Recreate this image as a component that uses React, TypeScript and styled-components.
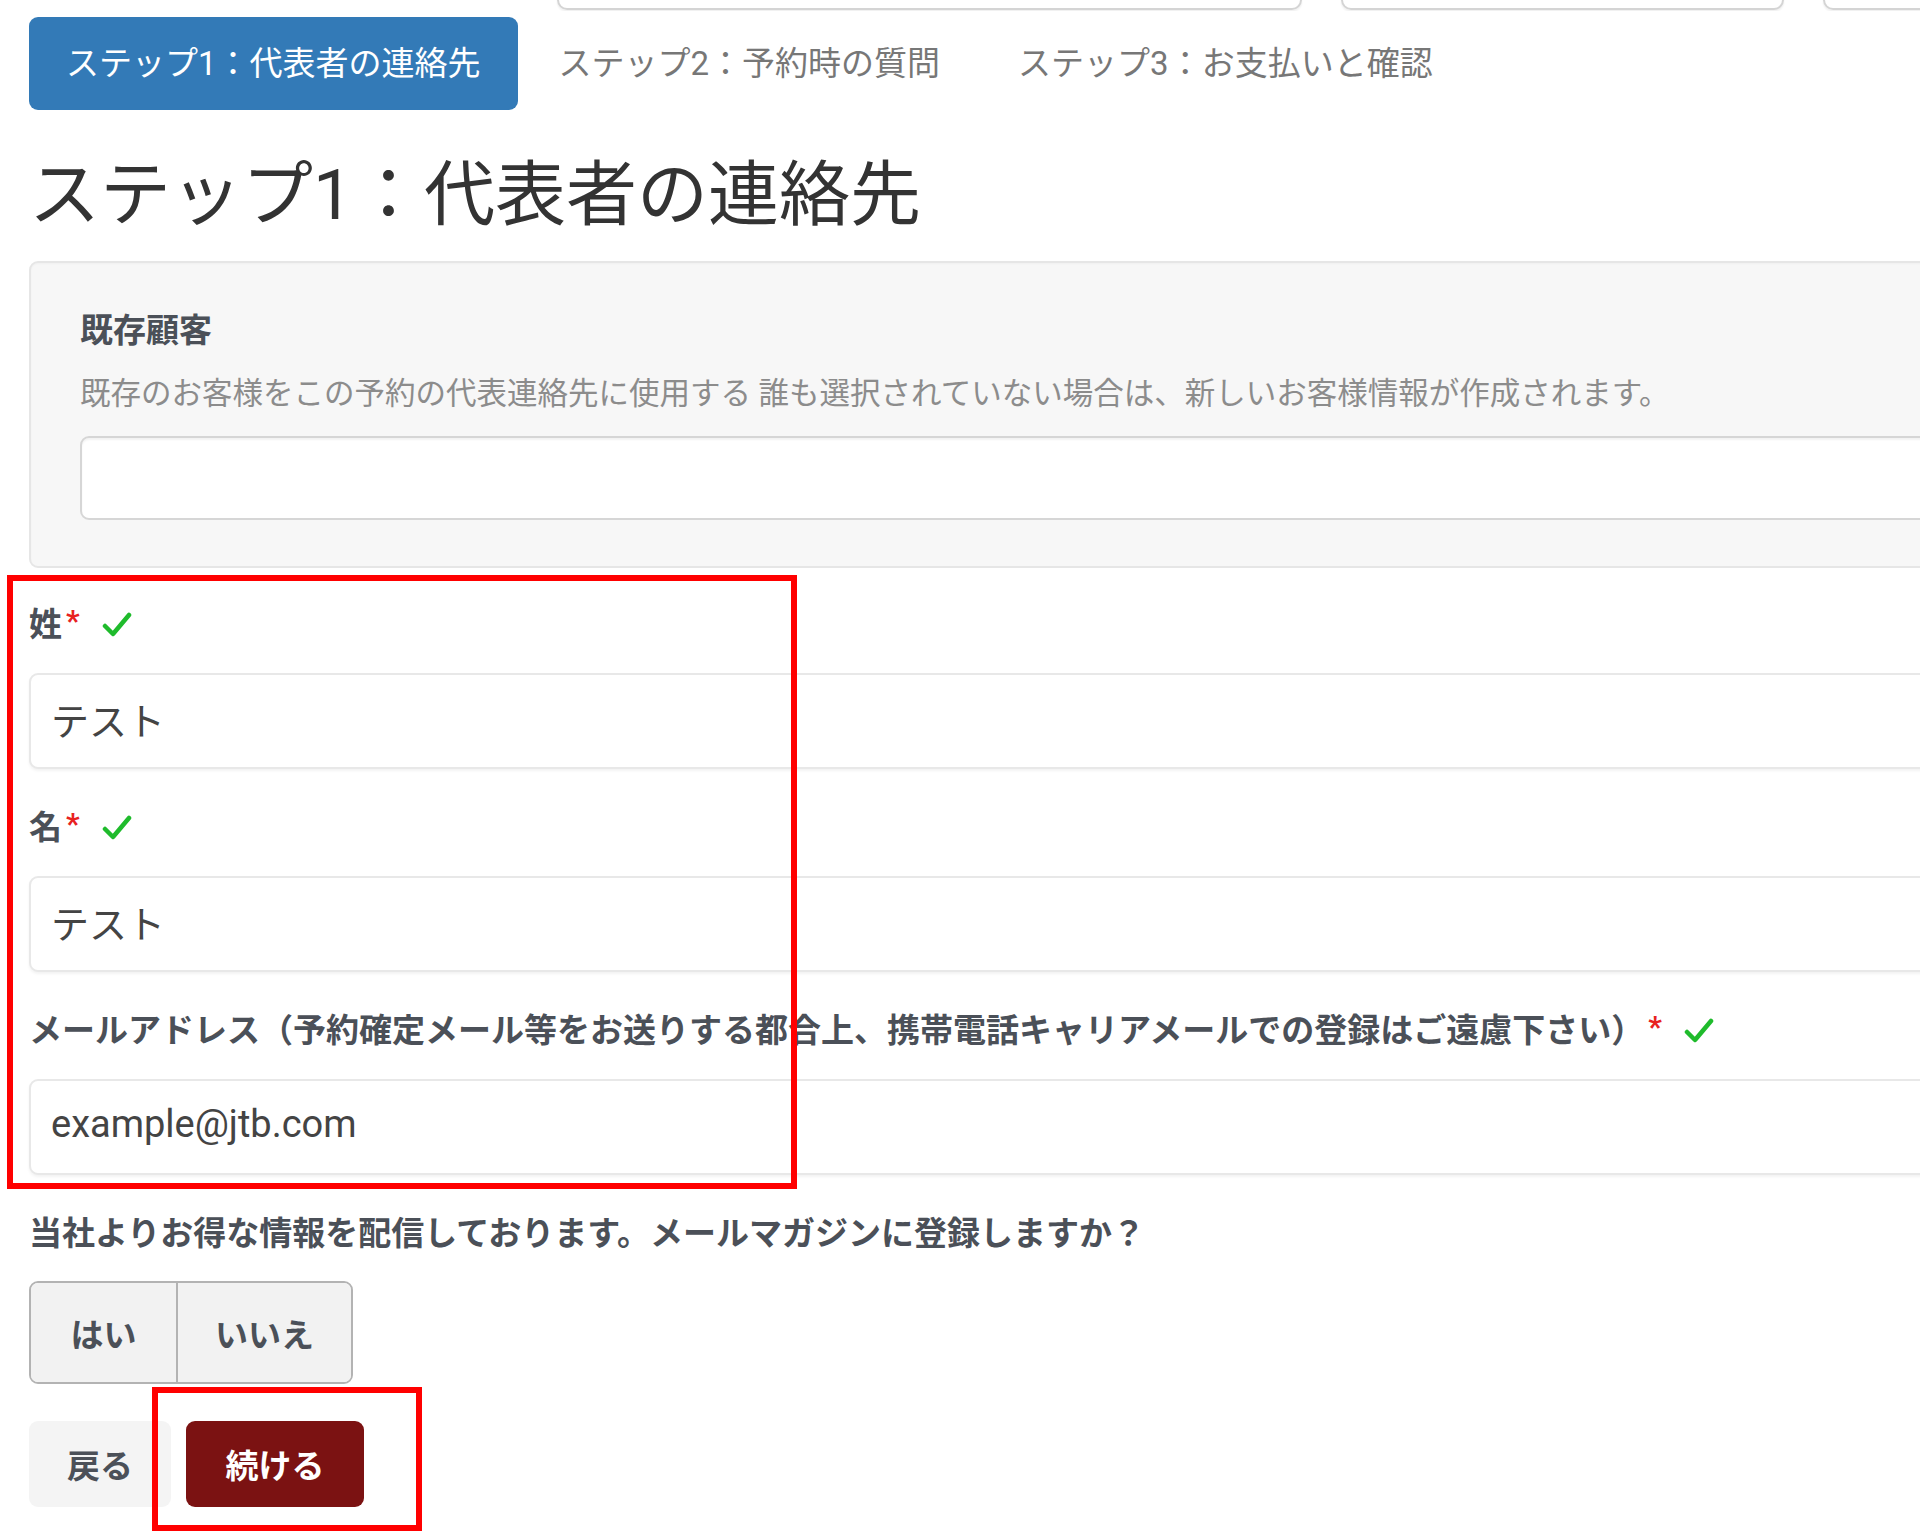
import React from "react";
import styled, { createGlobalStyle } from "styled-components";

const GlobalStyle = createGlobalStyle`
  html, body {
    margin: 0;
    padding: 0;
    overflow: hidden;
    background: #fff;
  }
  body {
    font-family: Roboto, "Noto Sans CJK JP", sans-serif;
    color: #333;
  }
`;

const Page = styled.div`
  position: relative;
  width: 2600px;
  height: 1533px;
  padding-left: 29px;
  box-sizing: border-box;
`;

const TopStrip = styled.div`
  display: flex;
  align-items: flex-end;
  gap: 39px;
  height: 11px;
  padding-left: 528px;
  overflow: hidden;
`;

const TopBox = styled.div<{ w: number }>`
  width: ${(p) => p.w}px;
  height: 40px;
  flex: none;
  box-sizing: border-box;
  border: 2px solid #d4d4d4;
  border-top: none;
  border-radius: 0 0 10px 10px;
  box-shadow: 0 2px 2px rgba(0, 0, 0, 0.06);
  margin-bottom: 1px;
`;

const Nav = styled.ul`
  display: flex;
  gap: 4px;
  list-style: none;
  margin: 6px 0 0;
  padding: 0;
`;

const Pill = styled.li<{ active?: boolean }>`
  height: 93px;
  line-height: 93px;
  padding: 0 37px;
  font-size: 33px;
  border-radius: 9px;
  white-space: nowrap;
  color: ${(p) => (p.active ? "#fff" : "#777")};
  background: ${(p) => (p.active ? "#337ab7" : "transparent")};
`;

const Title = styled.h1`
  margin: 46px 0 0;
  font-size: 71px;
  line-height: 78px;
  font-weight: 400;
  color: #333;
  white-space: nowrap;
`;

const Well = styled.div`
  margin-top: 27px;
  width: 2400px;
  box-sizing: border-box;
  padding: 44px 0 46px 49px;
  background: #f7f7f7;
  border: 2px solid #e6e6e6;
  border-radius: 9px;
  box-shadow: inset 0 1px 2px rgba(0, 0, 0, 0.03);
`;

const Label = styled.div`
  font-size: 33px;
  line-height: 47px;
  font-weight: 700;
  color: #4b5058;
  white-space: nowrap;
  display: flex;
  align-items: center;
`;

const Help = styled.div`
  margin-top: 18px;
  font-size: 30.5px;
  line-height: 44px;
  color: #8c8c8c;
  white-space: nowrap;
`;

const SelectBox = styled.div`
  margin-top: 20px;
  height: 84px;
  box-sizing: border-box;
  background: #fff;
  border: 2px solid #d6d6d6;
  border-radius: 9px;
  box-shadow: inset 0 2px 2px rgba(0, 0, 0, 0.05);
`;

const Fields = styled.div`
  margin-top: 33px;
`;

const Field = styled.div`
  margin-bottom: 35px;
`;

const Input = styled.div`
  margin-top: 25px;
  width: 2400px;
  height: 96px;
  box-sizing: border-box;
  padding: 0 0 6px 20px;
  display: flex;
  align-items: center;
  font-size: 38px;
  color: #444;
  background: #fff;
  border: 2px solid #e8e8e8;
  border-radius: 9px;
  box-shadow: 0 2px 3px rgba(0, 0, 0, 0.05);
  white-space: nowrap;
`;

const Req = styled.span`
  color: #e8221f;
  font-size: 30px;
  font-weight: 700;
  margin-left: 4px;
  position: relative;
  top: -4px;
`;

const Check = styled.svg`
  width: 30px;
  height: 26px;
  margin-left: 22px;
`;

const Question = styled(Label)`
  margin-top: 0;
`;

const BtnGroup = styled.div`
  display: flex;
  margin-top: 24px;
  width: fit-content;
  border: 2px solid #b3b3b3;
  border-radius: 9px;
  overflow: hidden;
`;

const GroupBtn = styled.div<{ w: number }>`
  width: ${(p) => p.w}px;
  height: 99px;
  display: flex;
  align-items: center;
  justify-content: center;
  font-size: 33px;
  font-weight: 700;
  color: #4b5058;
  background: #f2f2f2;
  & + & {
    border-left: 2px solid #b3b3b3;
  }
`;

const Actions = styled.div`
  display: flex;
  gap: 15px;
  margin-top: 37px;
`;

const ActionBtn = styled.div<{ primary?: boolean; w: number }>`
  width: ${(p) => p.w}px;
  height: 86px;
  display: flex;
  align-items: center;
  justify-content: center;
  border-radius: 9px;
  font-size: 33px;
  font-weight: 700;
  color: ${(p) => (p.primary ? "#fff" : "#4b5058")};
  background: ${(p) => (p.primary ? "#7b1212" : "#f4f4f4")};
`;

const Callout = styled.div<{ x: number; y: number; w: number; h: number }>`
  position: absolute;
  left: ${(p) => p.x}px;
  top: ${(p) => p.y}px;
  width: ${(p) => p.w}px;
  height: ${(p) => p.h}px;
  box-sizing: border-box;
  border: 6px solid #ff0000;
  pointer-events: none;
`;

const CheckMark = () => (
  <Check viewBox="0 0 30 26">
    <path d="M3 14 L11 22 L27 3" fill="none" stroke="#1fbb2c" strokeWidth="4.5" strokeLinecap="round" strokeLinejoin="round" />
  </Check>
);

const FieldLabel = ({ text }: { text: string }) => (
  <Label>
    {text}
    <Req>*</Req>
    <CheckMark />
  </Label>
);

export default function App() {
  return (
    <Page>
      <GlobalStyle />
      <TopStrip>
        <TopBox w={745} />
        <TopBox w={443} />
        <TopBox w={400} />
      </TopStrip>
      <Nav>
        <Pill active>ステップ1：代表者の連絡先</Pill>
        <Pill>ステップ2：予約時の質問</Pill>
        <Pill>ステップ3：お支払いと確認</Pill>
      </Nav>
      <Title>ステップ1：代表者の連絡先</Title>
      <Well>
        <Label>既存顧客</Label>
        <Help>既存のお客様をこの予約の代表連絡先に使用する 誰も選択されていない場合は、新しいお客様情報が作成されます。</Help>
        <SelectBox />
      </Well>
      <Fields>
        <Field>
          <FieldLabel text="姓" />
          <Input>テスト</Input>
        </Field>
        <Field>
          <FieldLabel text="名" />
          <Input>テスト</Input>
        </Field>
        <Field>
          <FieldLabel text="メールアドレス（予約確定メール等をお送りする都合上、携帯電話キャリアメールでの登録はご遠慮下さい）" />
          <Input>example@jtb.com</Input>
        </Field>
      </Fields>
      <Question>当社よりお得な情報を配信しております。メールマガジンに登録しますか？</Question>
      <BtnGroup>
        <GroupBtn w={145}>はい</GroupBtn>
        <GroupBtn w={173}>いいえ</GroupBtn>
      </BtnGroup>
      <Actions>
        <ActionBtn w={142}>戻る</ActionBtn>
        <ActionBtn primary w={178}>続ける</ActionBtn>
      </Actions>
      <Callout x={7} y={575} w={790} h={614} />
      <Callout x={152} y={1387} w={270} h={144} />
    </Page>
  );
}
